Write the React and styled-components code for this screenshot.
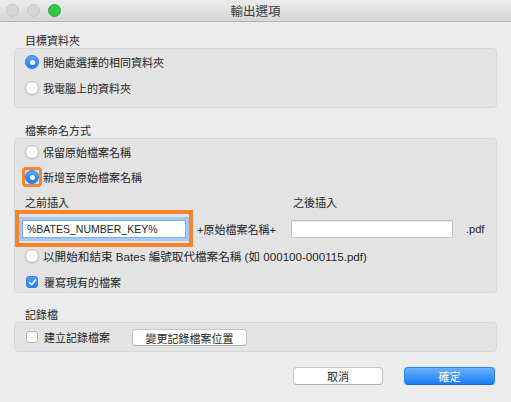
import React from 'react';
import styled, { createGlobalStyle } from 'styled-components';

const GlobalStyle = createGlobalStyle`
  body {
    margin: 0;
    background: #ececec;
    font-family: "Liberation Sans", "Noto Sans CJK TC", sans-serif;
    color: #262626;
  }
`;

const Window = styled.div`
  width: 511px;
  height: 402px;
  background: #ececec;
  overflow: hidden;
`;

const TitleBar = styled.div`
  height: 21px;
  border-bottom: 1px solid #b4b4b4;
  background: linear-gradient(#ebebeb, #d6d6d6);
  display: flex;
  align-items: center;
  position: relative;
`;

const Lights = styled.div`
  display: flex;
  gap: 8px;
  padding-left: 6px;
`;

const Light = styled.span`
  width: 11px;
  height: 11px;
  border-radius: 50%;
  background: ${p => (p.$on ? '#33c748' : '#d6d6d6')};
  border: 0.5px solid ${p => (p.$on ? '#27a83a' : '#c6c6c6')};
`;

const Title = styled.div`
  position: absolute;
  left: 0;
  right: 0;
  text-align: center;
  font-size: 12.5px;
  color: #3c3c3c;
  pointer-events: none;
`;

const Content = styled.div`
  padding: 0 14px;
`;

const SectionLabel = styled.div`
  margin-top: ${p => p.$top}px;
  padding-left: 11px;
  font-size: 11px;
  line-height: 14px;
`;

const Box = styled.div`
  background: #e3e3e3;
  border: 1px solid #d7d7d7;
  border-radius: 4px;
  padding: ${p => p.$pad || '0'};
`;

const Row = styled.div`
  display: flex;
  align-items: center;
  height: ${p => p.$h}px;
  margin-top: ${p => p.$mt || 0}px;
  padding-left: 10px;
  font-size: ${p => p.$fs || 11}px;
  gap: ${p => p.$gap || 4}px;
  white-space: nowrap;
`;

const Radio = styled.span`
  box-sizing: border-box;
  width: 14px;
  height: 14px;
  border-radius: 50%;
  flex: none;
  display: flex;
  align-items: center;
  justify-content: center;
  background: ${p => (p.$checked ? 'linear-gradient(#5aa6fa, #1f78f2)' : '#fff')};
  border: 1px solid ${p => (p.$checked ? '#2f7fe6' : '#b8b8b8')};
  box-shadow: 0 0.5px 1px rgba(0, 0, 0, 0.15);
  &::after {
    content: '';
    display: ${p => (p.$checked ? 'block' : 'none')};
    width: 5px;
    height: 5px;
    border-radius: 50%;
    background: #fff;
  }
`;

const Highlight = styled.span`
  display: flex;
  outline: 3.5px solid #f2852e;
  outline-offset: 0;
  border-radius: 1px;
`;

const Check = styled.span`
  box-sizing: border-box;
  width: 12px;
  height: 12px;
  border-radius: 3px;
  flex: none;
  margin-left: 1px;
  display: flex;
  align-items: center;
  justify-content: center;
  background: ${p => (p.$checked ? 'linear-gradient(#4f9ef8, #2a80f3)' : '#fff')};
  border: 1px solid ${p => (p.$checked ? '#2f7fe6' : '#b5b5b5')};
`;

const FieldGrid = styled.div`
  display: grid;
  grid-template-columns: 178px 98px 162px auto;
  grid-template-rows: 21px 37px;
  font-size: 11px;
  align-items: center;
`;

const FieldLabel = styled.div`
  align-self: end;
  line-height: 14px;
  padding-left: ${p => p.$pl}px;
`;

const OrangeFrame = styled.div`
  box-sizing: border-box;
  height: 37px;
  border: 4px solid #f2852e;
  display: flex;
  align-items: center;
  padding-left: 3px;
`;

const TextInput = styled.input`
  box-sizing: border-box;
  width: ${p => p.$w}px;
  height: 18px;
  border: 1px solid ${p => (p.$focus ? '#7faee9' : '#c3c3c3')};
  box-shadow: ${p => (p.$focus ? '0 0 0 3px #a7c8f2' : 'inset 0 1px 0 #e6e6e6')};
  background: #fff;
  font-family: "Liberation Sans", "Noto Sans CJK TC", sans-serif;
  font-size: 10.5px;
  color: #1e1e1e;
  padding: 0 4px;
  outline: none;
`;

const MidText = styled.div`
  padding-left: 4px;
`;

const Suffix = styled.div`
  padding-left: 13px;
`;

const Button = styled.button`
  box-sizing: border-box;
  height: ${p => p.$h || 17}px;
  width: ${p => p.$w}px;
  margin-left: ${p => p.$ml || 0}px;
  border-radius: 4px;
  font-family: "Liberation Sans", "Noto Sans CJK TC", sans-serif;
  font-size: 11px;
  padding: 0;
  cursor: default;
  color: ${p => (p.$primary ? '#fff' : '#262626')};
  background: ${p => (p.$primary ? 'linear-gradient(#6ab1fa, #1a7ef5)' : '#fff')};
  border: 1px solid ${p => (p.$primary ? '#2b83ee' : '#c4c4c4')};
  border-bottom-color: ${p => (p.$primary ? '#1768d6' : '#acacac')};
`;

const Footer = styled.div`
  display: flex;
  justify-content: flex-end;
  gap: 21px;
  padding-right: 2px;
  margin-top: 15px;
`;

const CheckMark = () => (
  <svg width="9" height="9" viewBox="0 0 9 9">
    <path d="M1.6 4.8 L3.6 6.8 L7.4 2" fill="none" stroke="#fff" strokeWidth="1.6" strokeLinecap="round" strokeLinejoin="round" />
  </svg>
);

export default function App() {
  return (
    <Window>
      <GlobalStyle />
      <TitleBar>
        <Lights>
          <Light />
          <Light />
          <Light $on />
        </Lights>
        <Title>輸出選項</Title>
      </TitleBar>
      <Content>
        <SectionLabel $top={12}>目標資料夾</SectionLabel>
        <Box $pad="0 0 6px">
          <Row $h={26}><Radio $checked />開始處選擇的相同資料夾</Row>
          <Row $h={26}><Radio />我電腦上的資料夾</Row>
        </Box>

        <SectionLabel $top={16}>檔案命名方式</SectionLabel>
        <Box>
          <Row $h={26}><Radio />保留原始檔案名稱</Row>
          <Row $h={24}><Highlight><Radio $checked /></Highlight>新增至原始檔案名稱</Row>
          <FieldGrid>
            <FieldLabel $pl={10}>之前插入</FieldLabel>
            <div />
            <FieldLabel $pl={2}>之後插入</FieldLabel>
            <div />
            <OrangeFrame>
              <TextInput $focus $w={164} readOnly value="%BATES_NUMBER_KEY%" />
            </OrangeFrame>
            <MidText>+原始檔案名稱+</MidText>
            <TextInput $w={162} readOnly value="" />
            <Suffix>.pdf</Suffix>
          </FieldGrid>
          <Row $h={17} $fs={11.6}><Radio />以開始和結束 Bates 編號取代檔案名稱 (如 000100-000115.pdf)</Row>
          <Row $h={20} $mt={8} $gap={6}><Check $checked><CheckMark /></Check>覆寫現有的檔案</Row>
        </Box>

        <SectionLabel $top={15}>記錄檔</SectionLabel>
        <Box>
          <Row $h={28} $gap={6}>
            <Check />建立記錄檔案
            <Button $w={115} $ml={16}>變更記錄檔案位置</Button>
          </Row>
        </Box>

        <Footer>
          <Button $w={90} $h={18}>取消</Button>
          <Button $w={91} $h={18} $primary>確定</Button>
        </Footer>
      </Content>
    </Window>
  );
}
